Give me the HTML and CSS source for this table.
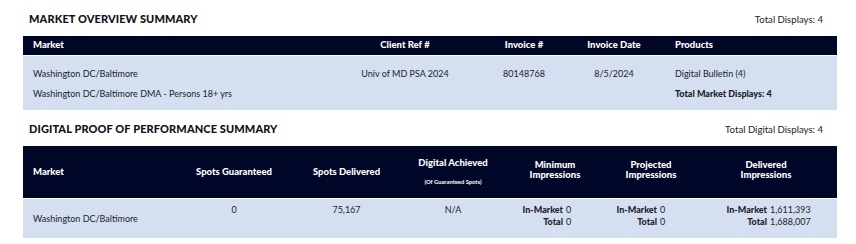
FILE: index.html
```html
<!DOCTYPE html>
<html>
<head>
<meta charset="utf-8">
<link rel="stylesheet" href="styles.css">
</head>
<body>
<div class="page">
  <section class="section">
    <div class="head">
      <h2 class="title">MARKET OVERVIEW SUMMARY</h2>
      <span class="total">Total Displays: 4</span>
    </div>
    <table class="tbl tbl-overview">
      <colgroup>
        <col class="c-market1"><col class="c-client"><col class="c-inv"><col class="c-date"><col class="c-prod">
      </colgroup>
      <thead>
        <tr>
          <th class="left">Market</th>
          <th>Client Ref #</th>
          <th>Invoice #</th>
          <th>Invoice Date</th>
          <th class="left prod">Products</th>
        </tr>
      </thead>
      <tbody>
        <tr class="first">
          <td class="left">Washington DC/Baltimore</td>
          <td>Univ of MD PSA 2024</td>
          <td>80148768</td>
          <td>8/5/2024</td>
          <td class="left prod">Digital Bulletin (4)</td>
        </tr>
        <tr class="last">
          <td class="left">Washington DC/Baltimore DMA - Persons 18+ yrs</td>
          <td></td>
          <td></td>
          <td></td>
          <td class="left prod strong">Total Market Displays: 4</td>
        </tr>
      </tbody>
    </table>
  </section>

  <section class="section">
    <div class="head">
      <h2 class="title">DIGITAL PROOF OF PERFORMANCE SUMMARY</h2>
      <span class="total">Total Digital Displays: 4</span>
    </div>
    <table class="tbl tbl-proof">
      <colgroup>
        <col class="p1"><col class="p2"><col class="p3"><col class="p4"><col class="p5"><col class="p6"><col class="p7">
      </colgroup>
      <thead>
        <tr>
          <th class="left">Market</th>
          <th>Spots Guaranteed</th>
          <th>Spots Delivered</th>
          <th><span class="l1">Digital Achieved</span><span class="sub">(Of Guaranteed Spots)</span></th>
          <th class="two">Minimum<br>Impressions</th>
          <th class="two">Projected<br>Impressions</th>
          <th class="two">Delivered<br>Impressions</th>
        </tr>
      </thead>
      <tbody>
        <tr>
          <td class="left mid">Washington DC/Baltimore</td>
          <td class="top">0</td>
          <td class="top">75,167</td>
          <td class="top">N/A</td>
          <td class="top">
            <div class="imp imp-min"><b>In-Market</b><span>0</span><b>Total</b><span>0</span></div>
          </td>
          <td class="top">
            <div class="imp imp-proj"><b>In-Market</b><span>0</span><b>Total</b><span>0</span></div>
          </td>
          <td class="top">
            <div class="imp imp-del"><b>In-Market</b><span>1,611,393</span><b>Total</b><span>1,688,007</span></div>
          </td>
        </tr>
      </tbody>
    </table>
  </section>
</div>
</body>
</html>
```

FILE: styles.css
```css
* { box-sizing: border-box; }
html, body { margin: 0; padding: 0; background: #ffffff; }
body {
  font-family: "Lato", "Noto Sans", sans-serif;
  color: #1d1d2b;
  font-size: 9px;
}
.page {
  width: 814px;
  margin-left: 23px;
}
.head {
  display: flex;
  justify-content: space-between;
  align-items: baseline;
  height: 36px;
  padding: 12px 14px 0 6px;
}
.title {
  margin: 0;
  font-size: 11px;
  line-height: 14px;
  font-weight: 900;
  color: #111118;
  letter-spacing: 0.1px;
}
.total {
  font-size: 9.6px;
  color: #222;
}
.tbl {
  width: 814px;
  border-collapse: collapse;
  table-layout: fixed;
}
.tbl th {
  background: #000628;
  color: #ffffff;
  font-weight: 900;
  font-size: 9.5px;
  text-align: center;
  padding: 0;
  border-bottom: 1px solid #ffffff;
}
.tbl td {
  background: #d4dff0;
  text-align: center;
  padding: 0;
  white-space: nowrap;
}
.tbl .left { text-align: left; padding-left: 10px; }

/* overview */
.c-market1 { width: 322px; }
.c-client { width: 120px; }
.c-inv { width: 118px; }
.c-date { width: 62px; }
.c-prod { width: 192px; }
.tbl-overview th { height: 19px; line-height: 18px; }
.tbl-overview .prod { padding-left: 30px; }
.tbl-overview td { line-height: 20px; }
.tbl-overview tr.first td { padding-top: 8px; }
.tbl-overview tr.last td { padding-bottom: 6px; }
.tbl-overview .strong { font-weight: 900; }

/* proof */
.p1 { width: 155px; }
.p2 { width: 112px; }
.p3 { width: 113px; }
.p4 { width: 100px; }
.p5 { width: 104px; }
.p6 { width: 88px; }
.p7 { width: 142px; }
.tbl-proof th { height: 53px; line-height: 12px; vertical-align: middle; }
.tbl-proof th.two { line-height: 10px; padding-bottom: 4px; }
.tbl-proof .l1 { display: block; line-height: 12px; }
.tbl-proof .sub {
  display: block;
  margin-top: 9px;
  font-size: 5.8px;
  line-height: 8px;
  font-weight: 700;
}
.tbl-proof td { height: 39px; line-height: 12px; }
.tbl-proof td.top { vertical-align: top; padding-top: 5px; }
.tbl-proof td.mid { vertical-align: middle; padding-top: 2px; }
.imp {
  display: grid;
  column-gap: 3px;
  text-align: left;
}
.imp-min { grid-template-columns: 60px 1fr; }
.imp-proj { grid-template-columns: 50px 1fr; }
.imp-del { grid-template-columns: 72px 1fr; }
.imp b { font-weight: 900; text-align: right; }
.imp span { text-align: left; }
```
